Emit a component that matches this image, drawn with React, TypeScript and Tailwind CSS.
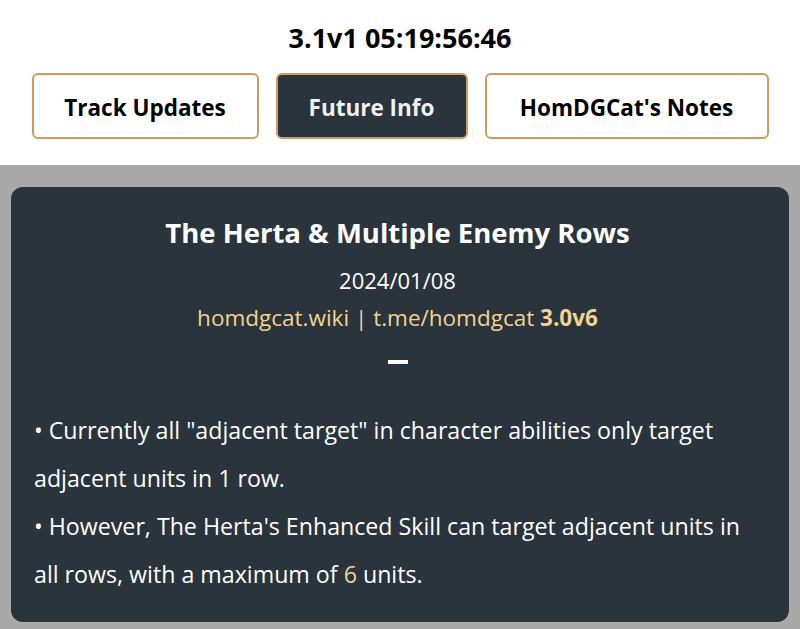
const FONT = "font-['Open_Sans',sans-serif]";

const TABS = [
  { label: 'Track Updates', active: false, width: 'w-[227px]' },
  { label: 'Future Info', active: true, width: 'w-[192px]' },
  { label: "HomDGCat's Notes", active: false, width: 'w-[284px]' },
];

export default function App() {
  return (
    <div className={`${FONT} min-h-screen bg-[#a9a9a9]`}>
      <header className="bg-white pt-[22px] pb-[26px]">
        <h1 className="text-center text-[27px] font-bold leading-[32px] text-black">3.1v1 05:19:56:46</h1>
        <nav className="mt-[19px] flex justify-center gap-[17px]">
          {TABS.map((t) => (
            <button
              key={t.label}
              className={`${t.width} h-[66px] rounded-md border-2 border-[#d39a5e] pt-[4px] text-[22.5px] font-bold ${
                t.active ? 'bg-[#29343d] text-[#eef0f2]' : 'bg-white text-black'
              }`}
            >
              {t.label}
            </button>
          ))}
        </nav>
      </header>

      <main className="px-[11px] pt-[22px] pb-[8px]">
        <section className="rounded-xl bg-[#29343d] pl-[23px] pr-[28px] pt-[29px] pb-[24px] text-white">
          <h2 className="text-center text-[27.5px] font-bold leading-[34px]">The Herta &amp; Multiple Enemy Rows</h2>
          <p className="mt-[15px] text-center text-[22px] leading-[30px]">2024/01/08</p>
          <p className="mt-[8px] text-center text-[22.5px] leading-[30px] text-[#f3d28f]">
            homdgcat.wiki | t.me/homdgcat <b>3.0v6</b>
          </p>
          <div className="mx-auto mt-[27px] h-[4px] w-[20px] bg-white" />
          <div className="mt-[42px] text-[23.2px] leading-[48px]">
            <p>• Currently all "adjacent target" in character abilities only target adjacent units in 1 row.</p>
            <p>
              • However, The Herta's Enhanced Skill can target adjacent units in all rows, with a maximum of{' '}
              <span className="text-[#f3d28f]">6</span> units.
            </p>
          </div>
        </section>
      </main>
    </div>
  );
}
